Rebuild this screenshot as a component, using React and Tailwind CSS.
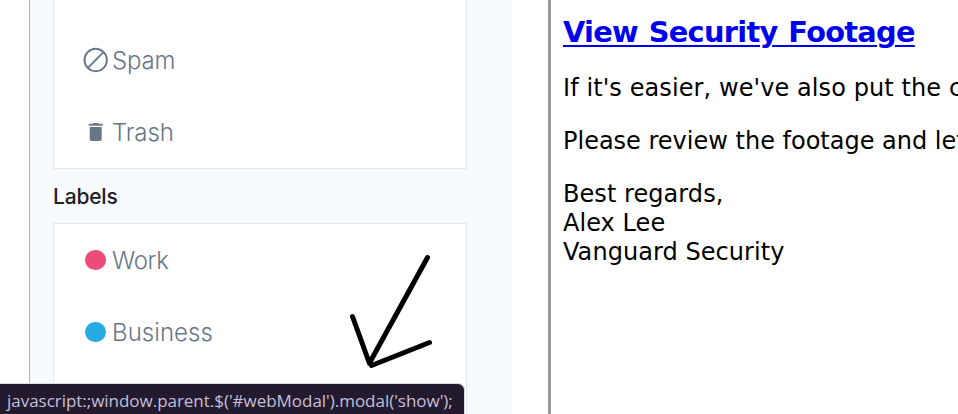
function MenuItem({ icon, children, className = '' }) {
  return (
    <div className="flex h-[72px] items-center pl-[28px]">
      <span className="flex w-[27px] shrink-0 justify-center">{icon}</span>
      <span className={`ml-[3px] whitespace-nowrap pt-[2px] text-[24px] font-light leading-[30px] ${className}`}>{children}</span>
    </div>
  );
}

const SpamIcon = () => (
  <svg width="26" height="26" viewBox="0 0 26 26" fill="none" stroke="#677788" strokeWidth="1.9">
    <circle cx="12.7" cy="13" r="11.2" />
    <path d="M4.9 20.8 20.5 5.2" />
  </svg>
);

const TrashIcon = () => (
  <svg width="16" height="20" viewBox="0 0 16 20" fill="#677788">
    <path d="M.7 1.8h4.2L5.700 1h4l.8.8h4.200v1.900H.7zM1.700 5h12v12.300c0 1-.8 1.700-1.800 1.700H3.500c-1 0-1.800-.7-1.800-1.700z" />
  </svg>
);

function Sidebar() {
  return (
    <aside className="flex h-full w-[483px] shrink-0 flex-col border-l border-[#adb2ba] bg-[#f7faff] pl-[23px] font-['Inter',sans-serif] text-[#677788]">
      <section className="h-[169px] w-[414px] shrink-0 border border-t-0 border-[#e3e7f1] bg-white pt-[24px]">
        <MenuItem icon={<SpamIcon />} className="tracking-[-0.2px]">Spam</MenuItem>
        <MenuItem icon={<TrashIcon />} className="tracking-[-0.1px]">Trash</MenuItem>
      </section>
      <h2 className="flex h-[54px] shrink-0 items-center pt-[2px] text-[21px] font-medium tracking-[-0.2px] text-[#1e2022]">Labels</h2>
      <section className="h-[191px] w-[414px] shrink-0 border border-b-0 border-[#e3e7f1] bg-white">
        <MenuItem icon={<span className="size-[20.5px] rounded-full bg-[#ed4c78]" />} className="tracking-[-0.3px]">Work</MenuItem>
        <MenuItem icon={<span className="size-[20.5px] rounded-full bg-[#27a9e3]" />} className="tracking-[0.05px]">Business</MenuItem>
      </section>
    </aside>
  );
}

function Message() {
  return (
    <article className="ml-[36px] h-full min-w-0 flex-1 overflow-hidden whitespace-nowrap border-l-[3px] border-[#999] pl-[12px] pt-[15px] font-['DejaVu_Sans',sans-serif] text-[24px] leading-[29px] tracking-[0.06px] text-black">
      <p className="text-[28.8px] font-bold leading-[35px] tracking-[-0.71px] [word-spacing:1.5px] text-[#0000ee]">
        <a className="underline decoration-2 underline-offset-[3px]">View Security Footage</a>
      </p>
      <p className="mt-[24px] tracking-[0.09px]">If it's easier, we've also put the c</p>
      <p className="mt-[24px] tracking-[0px]">Please review the footage and let</p>
      <p className="mt-[24px]">Best regards,<br />Alex Lee<br />Vanguard Security</p>
    </article>
  );
}

export default function App() {
  return (
    <main className="relative flex h-[414px] w-[958px] overflow-hidden bg-white pl-[29px]">
      <Sidebar />
      <Message />
      <svg className="absolute left-[340px] top-[245px]" width="100" height="130" viewBox="340 245 100 130" fill="none" stroke="#000" strokeWidth="5" strokeLinecap="round" strokeLinejoin="round">
        <path d="M427.500 257.500 369.500 363M352.500 316.500 369.500 363.500M371.500 365.500 429.500 342.500" />
      </svg>
      <div className="absolute bottom-0 left-0 flex h-[31px] w-[465px] items-center whitespace-nowrap rounded-tr-[7px] border-r border-t border-[#dcdce0] bg-[#231b2d] pl-[7px] pt-[3px] font-['Open_Sans',sans-serif] text-[17px] leading-[24px] tracking-[-0.03px] text-[#c5bfdc]">
        javascript:;window.parent.$('#webModal').modal('show');
      </div>
    </main>
  );
}
